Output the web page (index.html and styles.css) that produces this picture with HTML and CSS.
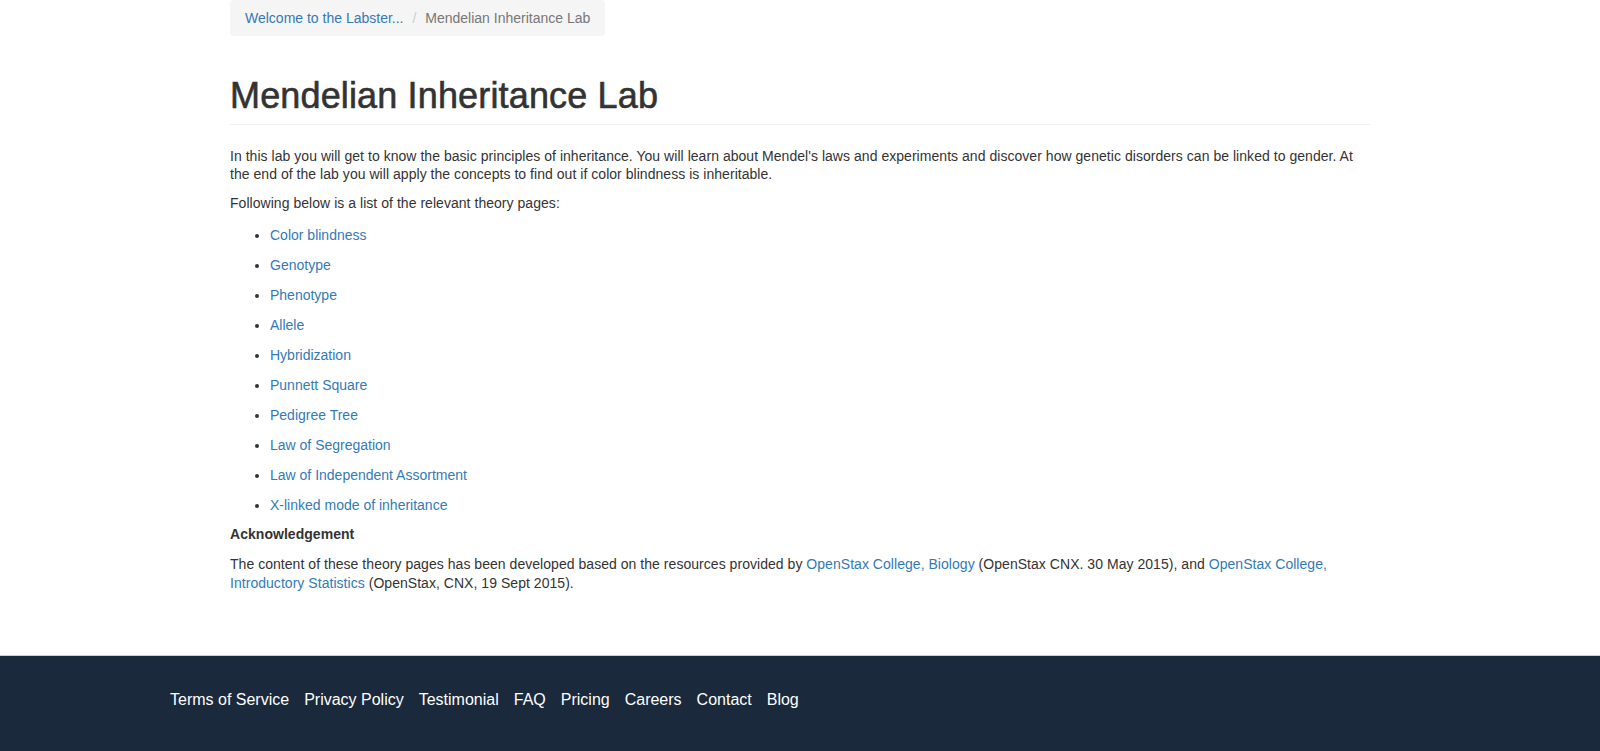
FILE: index.html
```html
<!DOCTYPE html>
<html lang="en">
<head>
<meta charset="utf-8">
<title>Mendelian Inheritance Lab</title>
<link rel="stylesheet" href="styles.css">
</head>
<body>
<main class="container">
  <ol class="breadcrumb">
    <li><a href="#">Welcome to the Labster...</a></li>
    <li class="active">Mendelian Inheritance Lab</li>
  </ol>
  <div class="page-header">
    <h1>Mendelian Inheritance Lab</h1>
  </div>
  <div class="content">
    <p>In this lab you will get to know the basic principles of inheritance. You will learn about Mendel's laws and experiments and discover how genetic disorders can be linked to gender. At the end of the lab you will apply the concepts to find out if color blindness is inheritable.</p>
    <p>Following below is a list of the relevant theory pages:</p>
    <ul class="theory-list">
      <li><a href="#">Color blindness</a></li>
      <li><a href="#">Genotype</a></li>
      <li><a href="#">Phenotype</a></li>
      <li><a href="#">Allele</a></li>
      <li><a href="#">Hybridization</a></li>
      <li><a href="#">Punnett Square</a></li>
      <li><a href="#">Pedigree Tree</a></li>
      <li><a href="#">Law of Segregation</a></li>
      <li><a href="#">Law of Independent Assortment</a></li>
      <li><a href="#">X-linked mode of inheritance</a></li>
    </ul>
    <p class="ack"><strong>Acknowledgement</strong></p>
    <p class="last">The content of these theory pages has been developed based on the resources provided by <a href="#">OpenStax College, Biology</a> (OpenStax CNX. 30 May 2015), and <a href="#">OpenStax College, Introductory Statistics</a> (OpenStax, CNX, 19 Sept 2015).</p>
  </div>
</main>
<footer class="footer">
  <nav class="footer-inner">
    <a href="#">Terms of Service</a>
    <a href="#">Privacy Policy</a>
    <a href="#">Testimonial</a>
    <a href="#">FAQ</a>
    <a href="#">Pricing</a>
    <a href="#">Careers</a>
    <a href="#">Contact</a>
    <a href="#">Blog</a>
  </nav>
</footer>
</body>
</html>
```
FILE: styles.css
```css
html, body {
  margin: 0;
  padding: 0;
  background: #fff;
}
body {
  font-family: "Liberation Sans", Arial, Helvetica, sans-serif;
  font-size: 14px;
  line-height: 18.57px;
  color: #333;
}
a {
  color: #337ab7;
  text-decoration: none;
}
.container {
  max-width: 1140px;
  margin: 0 auto;
  padding: 0 15px 62px;
}
.breadcrumb {
  display: flex;
  width: max-content;
  list-style: none;
  margin: 0 0 40px;
  padding: 8px 15px;
  font-size: 14px;
  line-height: 20px;
  background: #f5f5f5;
  border-radius: 4px;
}
.breadcrumb li + li::before {
  content: "/\00a0";
  padding: 0 5px 0 9px;
  color: #ccc;
}
.breadcrumb .active {
  color: #777;
}
.page-header {
  margin: 0 0 22px;
  padding-bottom: 8px;
  border-bottom: 1px solid #eee;
}
.page-header h1 {
  margin: 0;
  font-size: 36px;
  line-height: 1.1;
  font-weight: 500;
  letter-spacing: 0.15px;
  color: #333;
  -webkit-text-stroke: 0.6px #333;
}
.content p {
  margin: 0 0 10px;
  letter-spacing: 0.04px;
}
.theory-list {
  margin: 0 0 3px;
  padding-left: 40px;
}
.theory-list li {
  padding: 4px 0 7.43px;
}
.content .ack {
  margin-bottom: 11px;
}
.content .last {
  margin: 0;
  line-height: 19.3px;
}
.footer {
  border-top: 1px solid #cfcfcf;
  background: #1a293b;
  padding: 33.5px 0 45px;
}
.footer-inner {
  max-width: 1260px;
  margin: 0 auto;
  display: flex;
  gap: 15px;
  font-size: 16px;
  line-height: 20px;
}
.footer-inner a {
  color: #fff;
}
```
